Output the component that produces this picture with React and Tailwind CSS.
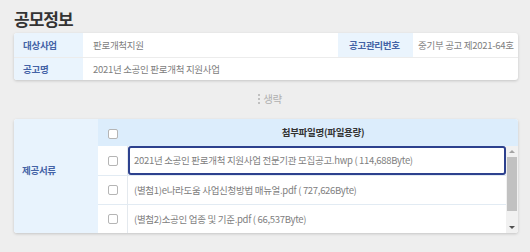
import { useState } from 'react'

const files = [
  '2021년 소공인 판로개척 지원사업 전문기관 모집공고.hwp ( 114,688Byte)',
  '(별첨1)e나라도움 사업신청방법 매뉴얼.pdf ( 727,626Byte)',
  '(별첨2)소공인 업종 및 기준.pdf ( 66,537Byte)',
]

function Check() {
  return <span className="block w-[10px] h-[10px] rounded-[2px] border border-[#b5b5b5] bg-white" />
}

export default function App() {
  const [active] = useState(0)

  return (
    <div className="w-[530px] h-[252px] bg-[#eeeeee] px-[14px] pt-[8px] text-[9.5px] tracking-[-0.3px] text-[#808080] font-['Noto_Sans_CJK_KR','Noto_Sans',sans-serif] overflow-hidden">
      <h2 className="text-[17px] leading-[22px] font-bold tracking-[-1px] text-[#333] mb-[3px]">공모정보</h2>

      {/* 기본 정보 */}
      <div className="w-[504px] bg-white rounded-[3px] shadow-[0_1px_3px_rgba(0,0,0,0.18)] overflow-hidden">
        <div className="flex h-[24px]">
          <div className="w-[69px] bg-[#eaf4fd] flex items-center pl-[9px] font-bold text-[#4463a6]">대상사업</div>
          <div className="flex-1 flex items-center pl-[10px]">판로개척지원</div>
          <div className="w-[75px] bg-[#eaf4fd] flex items-center pl-[11px] font-bold text-[#4463a6]">공고관리번호</div>
          <div className="w-[105px] flex items-center pl-[5px]">중기부 공고 제2021-64호</div>
        </div>
        <div className="flex h-[23px] border-t border-[#ececec]">
          <div className="w-[69px] bg-[#eaf4fd] flex items-center pl-[9px] font-bold text-[#4463a6]">공고명</div>
          <div className="flex-1 flex items-center pl-[10px]">2021년 소공인 판로개척 지원사업</div>
        </div>
      </div>

      {/* 생략 */}
      <div className="h-[39px] flex items-center justify-center pl-[10px] pb-[2px] text-[#b0b0b0] text-[10.5px]">
        <span className="flex flex-col gap-[2px] mr-[3px]">
          <span className="w-[2px] h-[2px] rounded-full bg-[#b0b0b0]" />
          <span className="w-[2px] h-[2px] rounded-full bg-[#b0b0b0]" />
          <span className="w-[2px] h-[2px] rounded-full bg-[#b0b0b0]" />
        </span>
        생략
      </div>

      {/* 제공서류 */}
      <div className="w-[504px] h-[114px] flex bg-white rounded-[3px] shadow-[0_1px_3px_rgba(0,0,0,0.18)] overflow-hidden">
        <div className="w-[84px] bg-[#e8f3fd] flex items-center pl-[8px] pb-[12px] font-bold text-[#4463a6]">제공서류</div>
        <div className="flex-1 flex flex-col">
          <div className="h-[29px] flex bg-[#dcedfc]">
            <div className="w-[30px] flex items-center justify-center pt-[2px]"><Check /></div>
            <div className="flex-1 flex items-center justify-center font-bold text-[#333]">첨부파일명(파일용량)</div>
          </div>
          <div className="flex-1 flex">
            <div className="flex-1 flex flex-col">
              {files.map((f, i) => (
                <div key={i} className={`h-[29px] flex ${i > 0 ? 'border-t border-[#e2ebf3]' : ''}`}>
                  <div className="w-[30px] flex items-center justify-center border-r border-[#e4e9ee]"><Check /></div>
                  <div className={`flex-1 flex items-center whitespace-nowrap ${i === active ? 'pl-[4px] border-2 border-[#2d418e] rounded-[3px]' : 'pl-[6px]'}`}>{f}</div>
                </div>
              ))}
            </div>
            {/* scrollbar */}
            <div className="w-[12px] bg-[#f1f1f1] flex flex-col items-center">
              <div className="h-[11px] flex items-center justify-center">
                <span className="w-0 h-0 border-x-[3px] border-x-transparent border-b-[3px] border-b-[#a3a3a3]" />
              </div>
              <div className="w-[10px] h-[54px] bg-[#c1c1c1]" />
              <div className="flex-1" />
              <div className="h-[11px] flex items-center justify-center">
                <span className="w-0 h-0 border-x-[3px] border-x-transparent border-t-[3px] border-t-[#505050]" />
              </div>
            </div>
          </div>
        </div>
      </div>
    </div>
  )
}
